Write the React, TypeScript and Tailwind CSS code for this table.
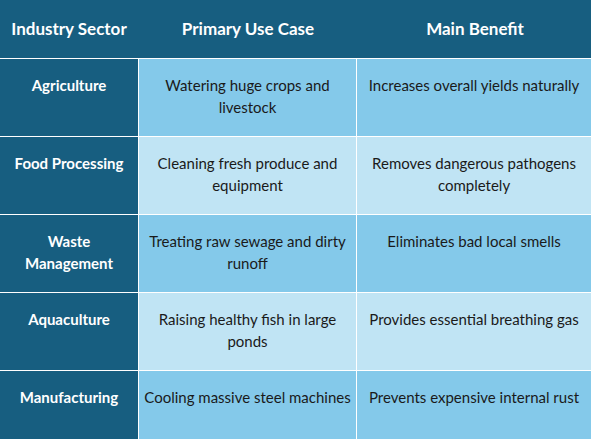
import React from "react";

interface Row {
  sector: string;
  useCase: string;
  benefit: string;
}

const rows: Row[] = [
  { sector: "Agriculture", useCase: "Watering huge crops and livestock", benefit: "Increases overall yields naturally" },
  { sector: "Food Processing", useCase: "Cleaning fresh produce and equipment", benefit: "Removes dangerous pathogens completely" },
  { sector: "Waste Management", useCase: "Treating raw sewage and dirty runoff", benefit: "Eliminates bad local smells" },
  { sector: "Aquaculture", useCase: "Raising healthy fish in large ponds", benefit: "Provides essential breathing gas" },
  { sector: "Manufacturing", useCase: "Cooling massive steel machines", benefit: "Prevents expensive internal rust" },
];

export default function App() {
  return (
    <div
      className="w-[591px] h-[439px] overflow-hidden bg-white"
      style={{ fontFamily: "Lato, 'Open Sans', sans-serif" }}
    >
      <div className="grid grid-cols-[138px_218px_234px] gap-x-px bg-[#175e80] h-[58px] items-center text-white font-bold text-[17px] text-center">
        <div>Industry Sector</div>
        <div>Primary Use Case</div>
        <div>Main Benefit</div>
      </div>
      <div className="flex flex-col gap-px bg-white pt-px">
        {rows.map((row, i) => {
          const shade = i % 2 === 0 ? "bg-[#84c9ea]" : "bg-[#c0e4f4]";
          return (
            <div key={i} className="grid grid-cols-[138px_217px_234px] gap-x-px h-[77px] text-center text-[15px] leading-[22px]">
              <div className="bg-[#175e80] text-white font-bold px-1 pt-[15px]">{row.sector}</div>
              <div className={`${shade} text-[#1a1a1a] px-[3px] pt-[15px]`}>{row.useCase}</div>
              <div className={`${shade} text-[#1a1a1a] px-2 pt-[15px]`}>{row.benefit}</div>
            </div>
          );
        })}
      </div>
    </div>
  );
}
